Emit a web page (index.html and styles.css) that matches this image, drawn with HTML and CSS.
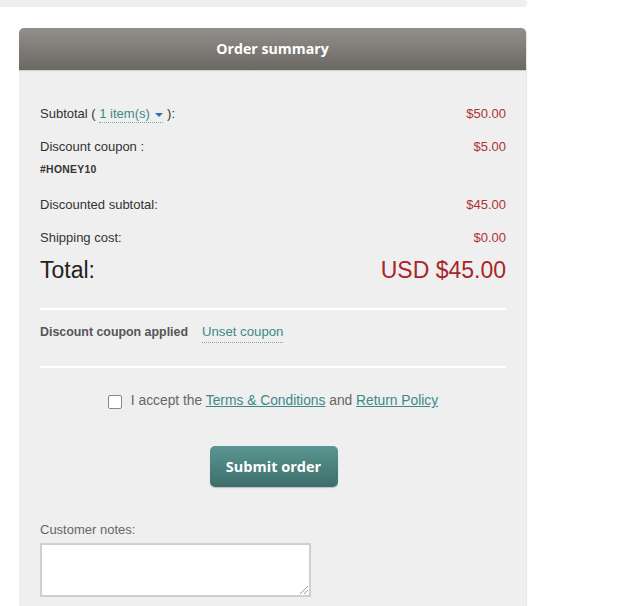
FILE: index.html
```html
<!DOCTYPE html>
<html>
<head>
<meta charset="utf-8">
<link rel="stylesheet" href="styles.css">
</head>
<body>
<div class="topstrip"></div>
<div class="panel">
  <div class="panel-head">Order summary</div>
  <div class="panel-body">
    <div class="row">
      <span class="label">Subtotal ( <a class="dotted items">1 item(s) <span class="caret"></span></a> ):</span>
      <span class="price">$50.00</span>
    </div>
    <div class="row">
      <span class="label">Discount coupon :</span>
      <span class="price">$5.00</span>
    </div>
    <div class="code">#HONEY10</div>
    <div class="row">
      <span class="label">Discounted subtotal:</span>
      <span class="price">$45.00</span>
    </div>
    <div class="row">
      <span class="label">Shipping cost:</span>
      <span class="price">$0.00</span>
    </div>
    <div class="row total">
      <span class="label">Total:</span>
      <span class="price">USD $45.00</span>
    </div>
    <div class="rule"></div>
    <div class="coupon">
      <span class="applied">Discount coupon applied</span>
      <a class="dotted">Unset coupon</a>
    </div>
    <div class="rule rule2"></div>
    <div class="accept">
      <span class="check"></span>
      <span>I accept the <a class="ul">Terms &amp; Conditions</a> and <a class="ul">Return Policy</a></span>
    </div>
    <div class="submit-wrap"><button class="submit">Submit order</button></div>
    <div class="notes-label">Customer notes:</div>
    <div class="notes"><span class="grip"></span></div>
  </div>
</div>
</body>
</html>
```
FILE: styles.css
```css
html, body { margin: 0; padding: 0; background: #fff; }
body { font-family: "Liberation Sans", Arial, sans-serif; font-size: 13px; color: #333; }

.topstrip {
  width: 526px; height: 6px; background: #efefef;
  border-bottom-right-radius: 4px;
  box-shadow: 1px 1px 1px rgba(0,0,0,0.08);
}

.panel {
  margin: 22px 0 0 19px; width: 507px; background: #efefef;
  border-radius: 5px 5px 0 0;
  box-shadow: 1px 0 1px rgba(0,0,0,0.10);
  height: 578px;
}
.panel-head {
  height: 42px; line-height: 42px; text-align: center;
  background: linear-gradient(#938f8b, #6b6763);
  border-radius: 5px 5px 0 0;
  color: #fff; font-family: "Open Sans", sans-serif; font-weight: 700; font-size: 14.2px;
  box-shadow: 0 1px 1px rgba(0,0,0,0.15);
}
.panel-body { padding: 27px 20px 0 21px; }

.row { display: flex; justify-content: space-between; align-items: center; height: 33px; }
.label { color: #333; }
.price { color: #b03232; font-size: 13px; }
.total .label { font-size: 23px; color: #222; }
.total .price { font-size: 23px; color: #a8262a; }

.code { font-size: 10.4px; font-weight: 700; color: #333; letter-spacing: 0.3px; line-height: 14px; padding-bottom: 11px; }

a { color: #3a8a8a; cursor: pointer; }
.dotted { text-decoration: none; border-bottom: 1px dotted #7aa; }
.items { padding-bottom: 1px; }
.caret {
  display: inline-block; width: 0; height: 0; vertical-align: middle;
  border-left: 4px solid transparent; border-right: 4px solid transparent;
  border-top: 4px solid #2d72ad; margin-left: 2px;
}

.rule { height: 2px; background: #fff; margin-top: 21px; }
.coupon { margin-top: 12px; line-height: 20px; display: flex; gap: 14px; }
.applied { font-weight: 700; font-size: 12.4px; color: #555; }
.coupon a { font-size: 13.2px; }
.rule2 { margin-top: 23px; }

.accept {
  margin-top: 23px; display: flex; justify-content: center; align-items: center; gap: 9px;
  color: #666; font-size: 13.8px; line-height: 20px;
}
.check {
  width: 12px; height: 12px; border: 1px solid #888; border-radius: 2px; background: #fff;
  margin-top: 2px;
}
.ul { text-decoration: underline; }

.submit-wrap { display: flex; justify-content: center; margin-top: 35px; }
.submit {
  width: 128px; height: 41px; border: 0; border-radius: 5px;
  background: linear-gradient(#5b9591, #3c6f6b);
  color: #fff; font-family: "Open Sans", sans-serif; font-weight: 700; font-size: 14.5px;
  box-shadow: 0 1px 1px rgba(0,0,0,0.2);
  margin-left: 1px;
}

.notes-label { margin-top: 35px; color: #666; line-height: 16px; font-size: 13px; }
.notes {
  margin-top: 5px; width: 267px; height: 50px; background: #fff;
  border: 2px solid #cfcfcf; position: relative;
}
.grip {
  position: absolute; right: 1px; bottom: 1px; width: 8px; height: 8px;
  background: linear-gradient(135deg, transparent 45%, #999 45%, #999 55%, transparent 55%, transparent 70%, #999 70%, #999 80%, transparent 80%);
}
```
